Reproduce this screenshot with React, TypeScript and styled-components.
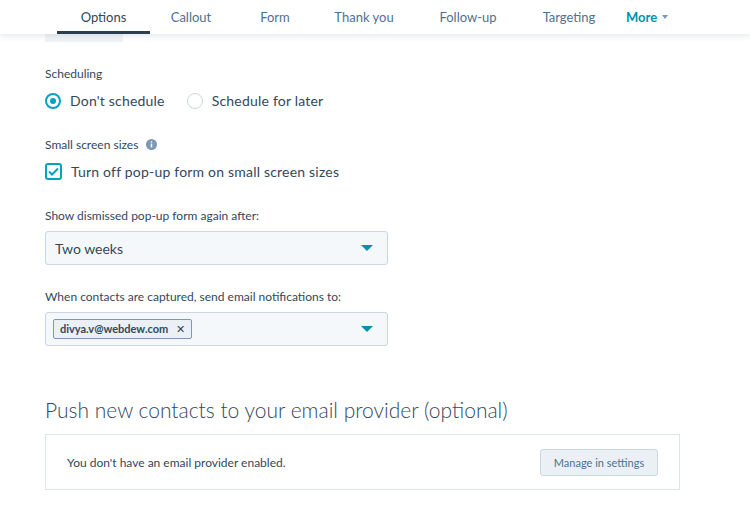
import React from 'react';
import styled, { createGlobalStyle } from 'styled-components';

const Global = createGlobalStyle`
  body { margin: 0; background: #fff; font-family: Lato, "Liberation Sans", sans-serif; color: #33475b; }
`;

const TabBar = styled.div`
  height: 34px;
  display: flex;
  align-items: stretch;
  padding-left: 57px;
  background: #fff;
  box-shadow: 0 2px 6px rgba(45, 62, 80, 0.12);
  position: relative;
`;

const Tab = styled.div<{ active?: boolean; w: number }>`
  width: ${({ w }) => w}px;
  display: flex;
  align-items: center;
  justify-content: center;
  font-size: 13px;
  color: ${({ active }) => (active ? '#33475b' : '#516f90')};
  border-bottom: 3px solid ${({ active }) => (active ? '#2d3e50' : 'transparent')};
  box-sizing: border-box;
  padding-top: 3px;
`;

const More = styled(Tab)`
  color: #0091ae;
  font-weight: 700;
  gap: 5px;
`;

const Ghost = styled.div`
  margin-left: 45px;
  width: 78px;
  height: 8px;
  background: #f1f4f7;
`;

const Content = styled.div`
  padding: 0 0 0 45px;
`;

const Label = styled.div<{ top: number }>`
  font-size: 12px;
  color: #33475b;
  margin-top: ${({ top }) => top}px;
  display: flex;
  align-items: center;
  gap: 8px;
`;

const Row = styled.div`
  display: flex;
  align-items: center;
  gap: 22px;
  margin-top: 11px;
`;

const Option = styled.label`
  display: flex;
  align-items: center;
  gap: 9px;
  font-size: 14px;
  color: #33475b;
  letter-spacing: 0.2px;
`;

const Radio = styled.span<{ on?: boolean }>`
  width: 16px;
  height: 16px;
  border-radius: 50%;
  box-sizing: border-box;
  border: ${({ on }) => (on ? '2px solid #00a4bd' : '1px solid #cbd6e2')};
  display: flex;
  align-items: center;
  justify-content: center;
  &::after {
    content: '';
    width: 6px;
    height: 6px;
    border-radius: 50%;
    background: ${({ on }) => (on ? '#00a4bd' : 'transparent')};
  }
`;

const Check = styled.span`
  width: 17px;
  height: 17px;
  box-sizing: border-box;
  border: 2px solid #00a4bd;
  border-radius: 3px;
  display: flex;
  align-items: center;
  justify-content: center;
`;

const Select = styled.div<{ top: number }>`
  width: 343px;
  height: 34px;
  box-sizing: border-box;
  margin-top: ${({ top }) => top}px;
  border: 1px solid #cbd6e2;
  border-radius: 3px;
  background: #f5f8fa;
  display: flex;
  align-items: center;
  justify-content: space-between;
  padding: 0 14px 0 9px;
  font-size: 14px;
  color: #33475b;
`;

const Caret = styled.span`
  width: 0;
  height: 0;
  border-left: 6px solid transparent;
  border-right: 6px solid transparent;
  border-top: 6px solid #0091ae;
`;

const Chip = styled.span`
  border: 1px solid #7c98b6;
  background: #eaf0f6;
  border-radius: 2px;
  font-size: 11px;
  font-weight: 700;
  color: #33475b;
  padding: 2px 6px;
  display: flex;
  gap: 8px;
  margin-left: -2px;
`;

const Heading = styled.h2`
  margin: 51px 0 0;
  font-weight: 300;
  font-size: 21px;
  color: #33475b;
`;

const Box = styled.div`
  margin-top: 12px;
  width: 635px;
  height: 56px;
  box-sizing: border-box;
  border: 1px solid #dfe3eb;
  display: flex;
  align-items: center;
  justify-content: space-between;
  padding: 0 21px;
  font-size: 12px;
`;

const Button = styled.div`
  width: 118px;
  height: 27px;
  box-sizing: border-box;
  border: 1px solid #cbd6e2;
  border-radius: 3px;
  background: #eaf0f6;
  display: flex;
  align-items: center;
  justify-content: center;
  font-size: 11px;
  color: #516f90;
`;

const tabs: [string, number][] = [
  ['Callout', 82], ['Form', 86], ['Thank you', 92], ['Follow-up', 116], ['Targeting', 86],
];

export default function App() {
  return (
    <>
      <Global />
      <TabBar>
        <Tab active w={93}>Options</Tab>
        {tabs.map(([t, w]) => <Tab key={t} w={w}>{t}</Tab>)}
        <More w={70}>More <Caret style={{ borderTopColor: '#7c98b6', borderWidth: '4px 3px 0' }} /></More>
      </TabBar>
      <Ghost />
      <Content>
        <Label top={24}>Scheduling</Label>
        <Row>
          <Option><Radio on />Don't schedule</Option>
          <Option><Radio />Schedule for later</Option>
        </Row>
        <Label top={28}>
          Small screen sizes
          <svg width="11" height="11" viewBox="0 0 12 12">
            <circle cx="6" cy="6" r="6" fill="#7c98b6" />
            <rect x="5.2" y="5" width="1.6" height="4.2" fill="#fff" />
            <circle cx="6" cy="3.3" r="0.9" fill="#fff" />
          </svg>
        </Label>
        <Row>
          <Option>
            <Check>
              <svg width="11" height="9" viewBox="0 0 11 9"><path d="M1 4.5l3 3L10 1.5" stroke="#00a4bd" strokeWidth="2" fill="none" /></svg>
            </Check>
            Turn off pop-up form on small screen sizes
          </Option>
        </Row>
        <Label top={28}>Show dismissed pop-up form again after:</Label>
        <Select top={8}>Two weeks<Caret /></Select>
        <Label top={24}>When contacts are captured, send email notifications to:</Label>
        <Select top={8}><Chip>divya.v@webdew.com<span style={{ fontWeight: 400 }}>✕</span></Chip><Caret /></Select>
        <Heading>Push new contacts to your email provider (optional)</Heading>
        <Box>
          You don't have an email provider enabled.
          <Button>Manage in settings</Button>
        </Box>
      </Content>
    </>
  );
}
